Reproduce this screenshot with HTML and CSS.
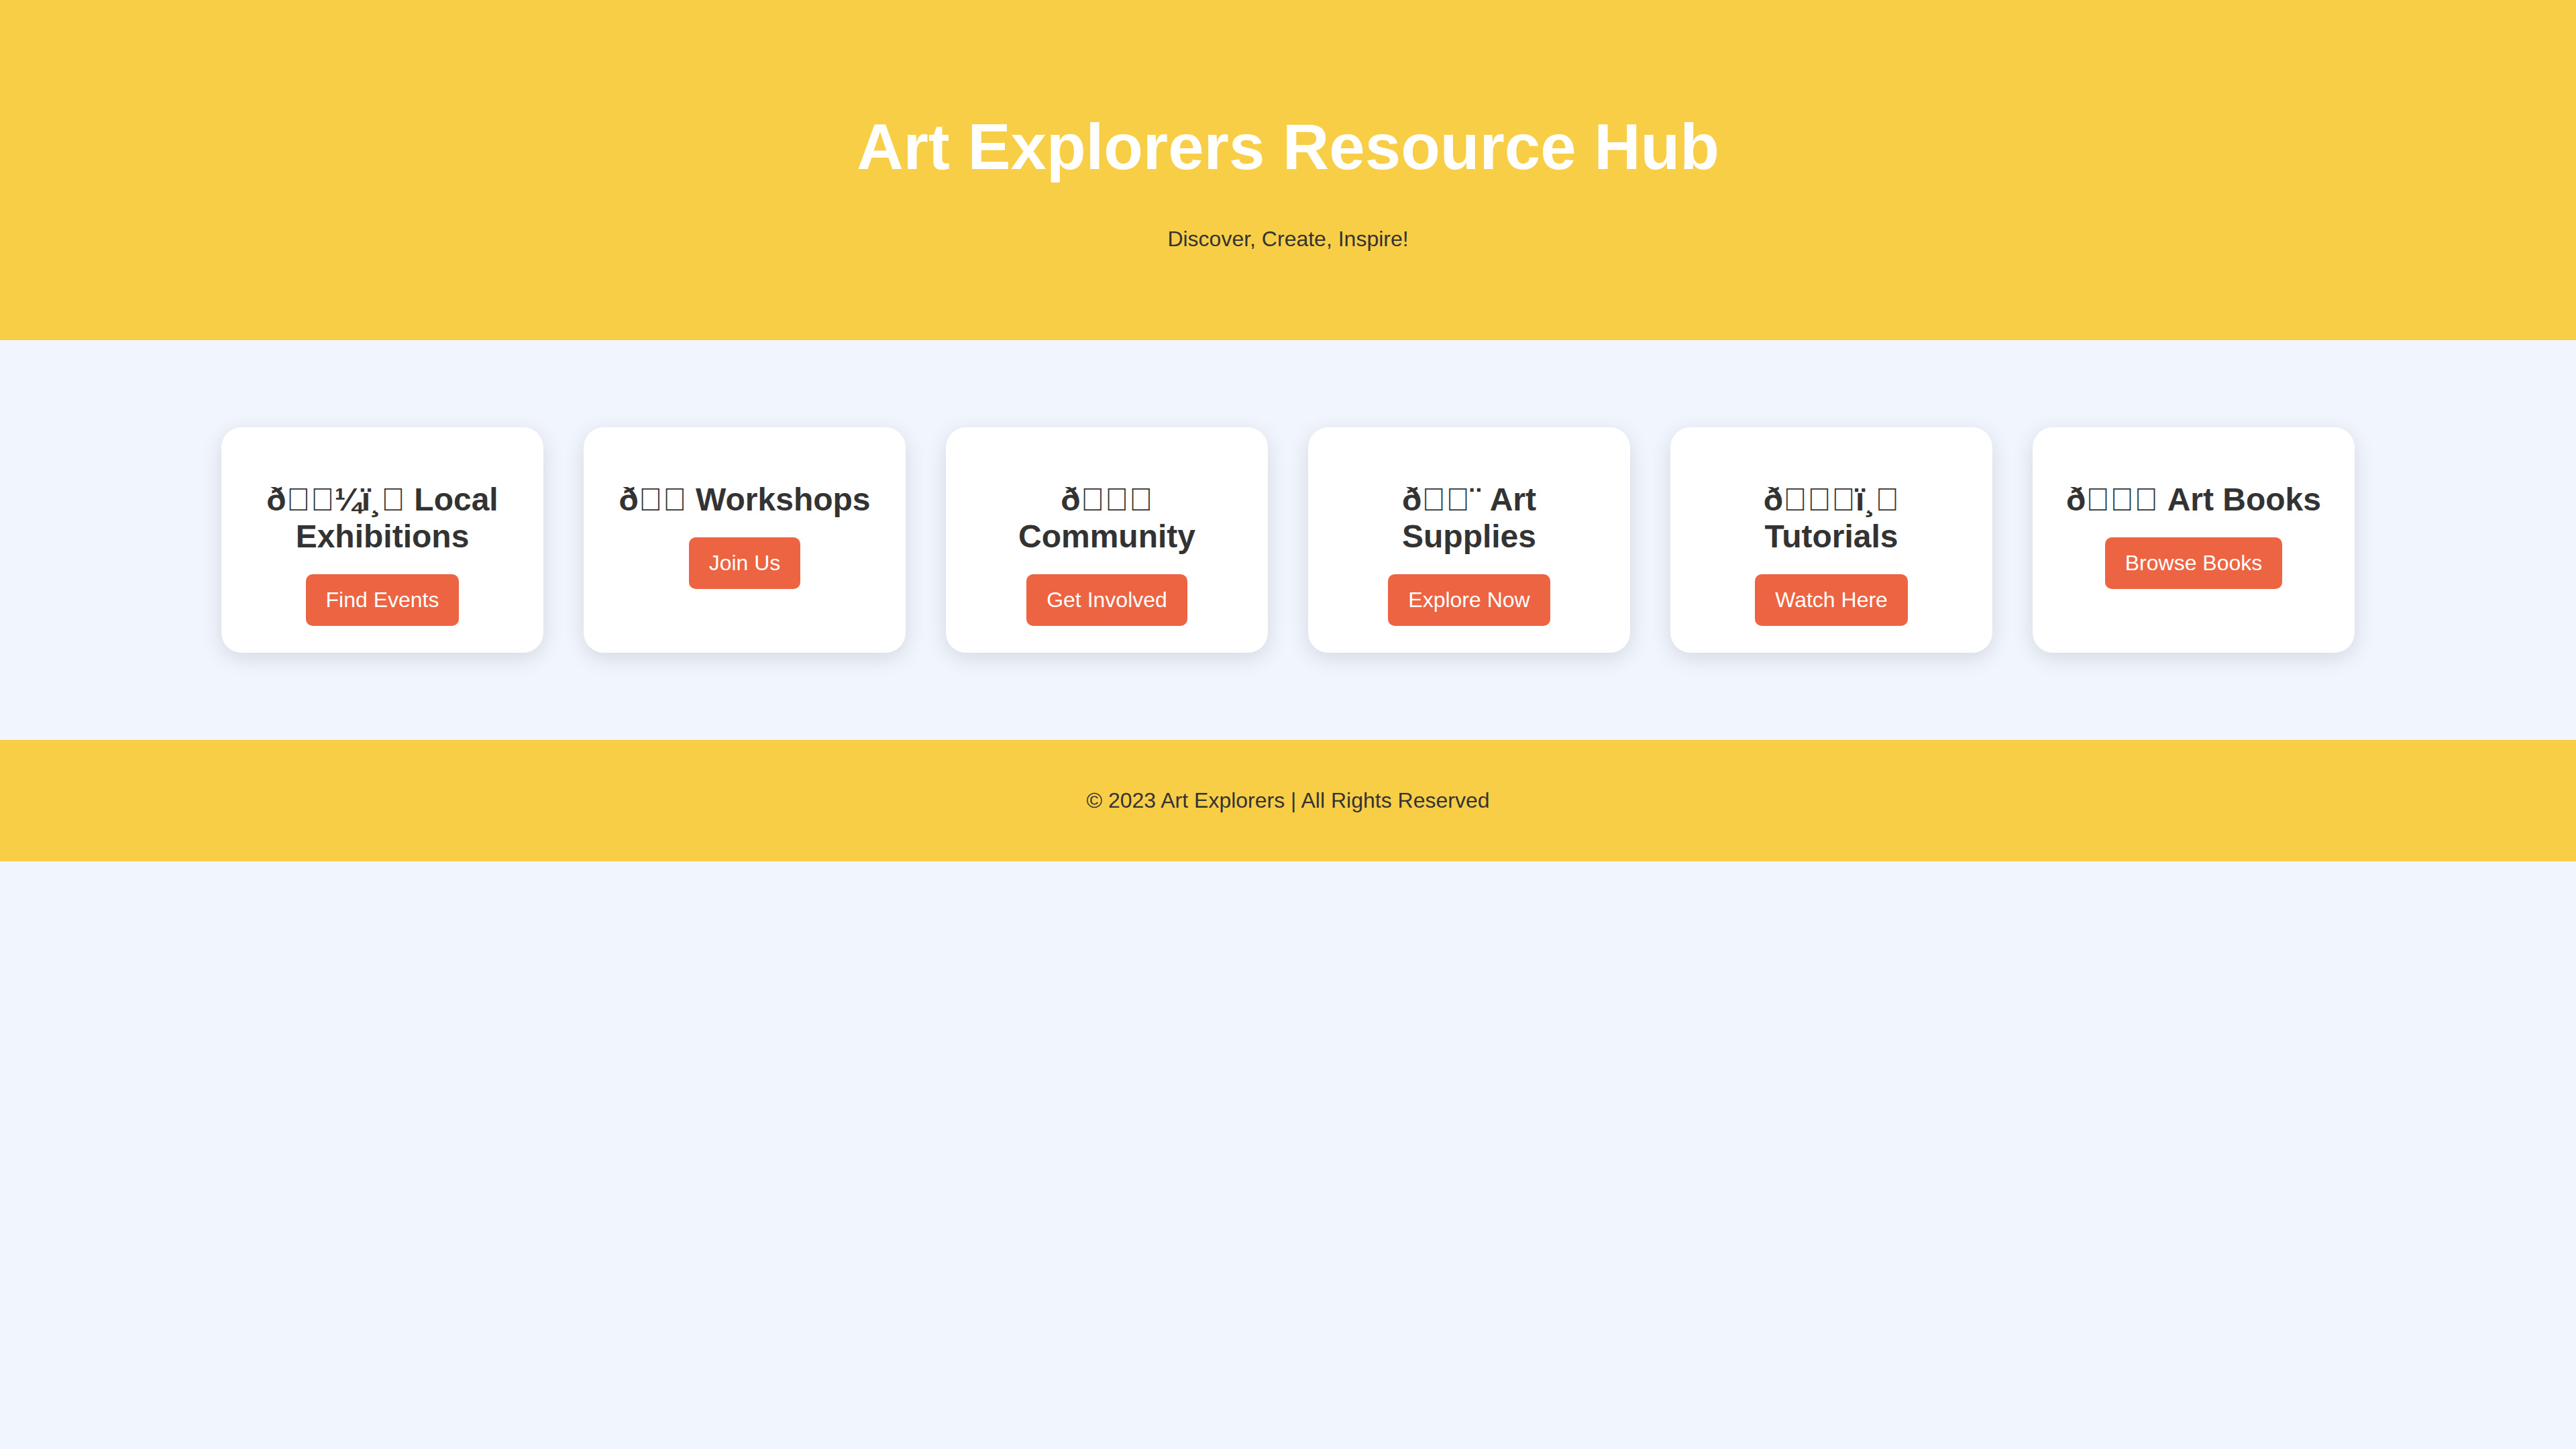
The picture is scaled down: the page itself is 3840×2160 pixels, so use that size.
FILE: index.html
```html
<!DOCTYPE html>
<html lang="en">
<head>
<meta charset="utf-8">
<title>Art Explorers Resource Hub</title>
<link rel="stylesheet" href="styles.css">
</head>
<body>
<header class="hero">
  <h1 class="hero-title">Art Explorers Resource Hub</h1>
  <p class="hero-sub">Discover, Create, Inspire!</p>
</header>
<main class="resources">
  <div class="card-row">
    <section class="card">
      <h2 class="card-title">&eth;&#xE000;&#xE001;&frac14;&iuml;&cedil;&#xE002; Local Exhibitions</h2>
      <a class="btn" href="#">Find Events</a>
    </section>
    <section class="card">
      <h2 class="card-title">&eth;&#xE000;&#xE001;&shy; Workshops</h2>
      <a class="btn" href="#">Join Us</a>
    </section>
    <section class="card">
      <h2 class="card-title">&eth;&#xE000;&#xE001;&#xE002; Community</h2>
      <a class="btn" href="#">Get Involved</a>
    </section>
    <section class="card">
      <h2 class="card-title">&eth;&#xE000;&#xE001;&uml; Art Supplies</h2>
      <a class="btn" href="#">Explore Now</a>
    </section>
    <section class="card">
      <h2 class="card-title">&eth;&#xE000;&#xE001;&#xE002;&iuml;&cedil;&#xE003; Tutorials</h2>
      <a class="btn" href="#">Watch Here</a>
    </section>
    <section class="card">
      <h2 class="card-title">&eth;&#xE000;&#xE001;&#xE002; Art Books</h2>
      <a class="btn" href="#">Browse Books</a>
    </section>
  </div>
</main>
<footer class="site-footer">
  <p class="footer-text">&copy; 2023 Art Explorers | All Rights Reserved</p>
</footer>
</body>
</html>
```

FILE: styles.css
```css
html, body {
  margin: 0;
  padding: 0;
}

body {
  font-family: "Liberation Sans", Arial, sans-serif;
  font-size: 32px;
  color: #333333;
  background: #f1f6fe;
}

.hero {
  background: #f8ce46;
  text-align: center;
  padding: 100px 40px;
}

.hero-title {
  font-size: 96px;
  font-weight: bold;
  color: #ffffff;
  margin: 64px 0;
}

.hero-sub {
  font-size: 32px;
  margin: 32px 0;
  color: #333333;
}

.resources {
  padding: 130px 0;
}

.card-row {
  display: flex;
  flex-wrap: wrap;
  justify-content: center;
  gap: 60px;
}

.card {
  box-sizing: border-box;
  width: 480px;
  background: #ffffff;
  border-radius: 30px;
  padding: 40px;
  text-align: center;
  box-shadow: 0 8px 32px rgba(0, 0, 0, 0.12);
}

.card-title {
  font-size: 48px;
  font-weight: bold;
  color: #333333;
  margin: 40px 0 29px;
}

.btn {
  display: inline-block;
  background: #ec6442;
  color: #ffffff;
  text-decoration: none;
  font-size: 32px;
  padding: 20px 30px;
  border-radius: 10px;
}

.site-footer {
  background: #f8ce46;
  text-align: center;
  padding: 40px;
}

.footer-text {
  margin: 32px 0;
  font-size: 32px;
  color: #333333;
}
```
